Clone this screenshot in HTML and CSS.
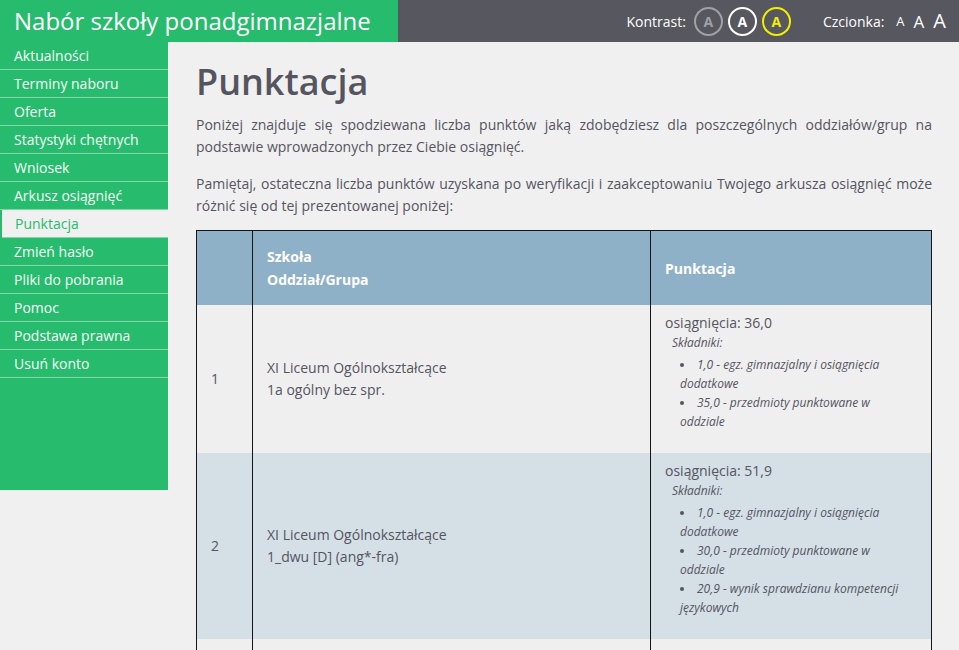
FILE: index.html
```html
<!DOCTYPE html>
<html lang="pl">
<head>
<meta charset="utf-8">
<title>Nabór szkoły ponadgimnazjalne</title>
<link rel="stylesheet" href="styles.css">
</head>
<body>
<header class="topbar">
  <div class="brand">Nabór szkoły ponadgimnazjalne</div>
  <div class="tools">
    <span class="tool-label">Kontrast:</span>
    <span class="contrast c-gray">A</span>
    <span class="contrast c-white">A</span>
    <span class="contrast c-yellow">A</span>
    <span class="tool-label font-label">Czcionka:</span>
    <span class="fs fs-s">A</span>
    <span class="fs fs-m">A</span>
    <span class="fs fs-l">A</span>
  </div>
</header>
<div class="layout">
  <nav class="sidebar">
    <a class="nav-item">Aktualności</a>
    <a class="nav-item">Terminy naboru</a>
    <a class="nav-item">Oferta</a>
    <a class="nav-item">Statystyki chętnych</a>
    <a class="nav-item">Wniosek</a>
    <a class="nav-item">Arkusz osiągnięć</a>
    <a class="nav-item active">Punktacja</a>
    <a class="nav-item">Zmień hasło</a>
    <a class="nav-item">Pliki do pobrania</a>
    <a class="nav-item">Pomoc</a>
    <a class="nav-item">Podstawa prawna</a>
    <a class="nav-item">Usuń konto</a>
  </nav>
  <main class="content">
    <h1 class="title">Punktacja</h1>
    <p class="text">Poniżej znajduje się spodziewana liczba punktów jaką zdobędziesz dla poszczególnych oddziałów/grup na podstawie wprowadzonych przez Ciebie osiągnięć.</p>
    <p class="text">Pamiętaj, ostateczna liczba punktów uzyskana po weryfikacji i zaakceptowaniu Twojego arkusza osiągnięć może różnić się od tej prezentowanej poniżej:</p>
    <table class="results">
      <thead>
        <tr>
          <th class="col-num"></th>
          <th class="col-school">Szkoła<br>Oddział/Grupa</th>
          <th class="col-points">Punktacja</th>
        </tr>
      </thead>
      <tbody>
        <tr class="row-odd">
          <td class="col-num">1</td>
          <td class="col-school">XI Liceum Ogólnokształcące<br>1a ogólny bez spr.</td>
          <td class="col-points">
            <div class="total">osiągnięcia: 36,0</div>
            <div class="parts-label">Składniki:</div>
            <ul class="parts">
              <li>1,0 - egz. gimnazjalny i osiągnięcia dodatkowe</li>
              <li>35,0 - przedmioty punktowane w oddziale</li>
            </ul>
          </td>
        </tr>
        <tr class="row-even">
          <td class="col-num">2</td>
          <td class="col-school">XI Liceum Ogólnokształcące<br>1_dwu [D] (ang*-fra)</td>
          <td class="col-points">
            <div class="total">osiągnięcia: 51,9</div>
            <div class="parts-label">Składniki:</div>
            <ul class="parts">
              <li>1,0 - egz. gimnazjalny i osiągnięcia dodatkowe</li>
              <li>30,0 - przedmioty punktowane w oddziale</li>
              <li>20,9 - wynik sprawdzianu kompetencji językowych</li>
            </ul>
          </td>
        </tr>
        <tr class="row-odd">
          <td class="col-num">3</td>
          <td class="col-school">XI Liceum Ogólnokształcące<br>1b ogólny</td>
          <td class="col-points">
            <div class="total">osiągnięcia: 36,0</div>
            <div class="parts-label">Składniki:</div>
            <ul class="parts">
              <li>1,0 - egz. gimnazjalny i osiągnięcia dodatkowe</li>
              <li>35,0 - przedmioty punktowane w oddziale</li>
            </ul>
          </td>
        </tr>
      </tbody>
    </table>
  </main>
</div>
</body>
</html>
```
FILE: styles.css
```css
* { box-sizing: border-box; }
html, body {
  margin: 0;
  padding: 0;
  background: #f0f0f0;
  font-family: "Open Sans", "Liberation Sans", sans-serif;
  color: #55555f;
}
.topbar {
  display: flex;
  height: 42px;
}
.brand {
  width: 398px;
  background: #27bb6d;
  color: #ffffff;
  font-size: 24px;
  line-height: 42px;
  padding-left: 14px;
  white-space: nowrap;
}
.tools {
  flex: 1;
  background: #57575f;
  display: flex;
  align-items: center;
  justify-content: flex-end;
  padding-right: 13px;
  color: #ffffff;
  font-size: 14px;
}
.tool-label { margin-right: 8px; }
.font-label { margin-left: 32px; margin-right: 12px; }
.contrast {
  width: 29px;
  height: 29px;
  border-radius: 50%;
  border: 2px solid;
  display: flex;
  align-items: center;
  justify-content: center;
  font-weight: 700;
  font-size: 14px;
  margin-right: 5px;
}
.c-gray { border-color: #a0a0a6; color: #a0a0a6; }
.c-white { border-color: #ffffff; color: #ffffff; }
.c-yellow { border-color: #f2f000; color: #f2f000; margin-right: 0; }
.fs { margin-left: 9px; line-height: 1; }
.fs-s { font-size: 13px; margin-left: 0; }
.fs-m { font-size: 17px; }
.fs-l { font-size: 20px; }

.layout {
  display: flex;
  align-items: flex-start;
}
.sidebar {
  width: 168px;
  height: 448px;
  background: #27bb6d;
  flex-shrink: 0;
  display: flex;
  flex-direction: column;
}
.nav-item {
  display: block;
  height: 28px;
  line-height: 28px;
  padding-left: 14px;
  font-size: 14px;
  color: #f4fff8;
  border-bottom: 1px solid #7fd8a6;
  white-space: nowrap;
}
.nav-item.active {
  background: #f0f0f0;
  color: #27bb6d;
  margin-left: 2px;
  padding-left: 13px;
}

.content {
  flex: 1;
  padding: 17px 27px 0 28px;
}
.title {
  margin: 0 0 9px;
  font-size: 36px;
  line-height: 46px;
  font-weight: 600;
  color: #55555f;
}
.text {
  margin: 0 0 15px;
  font-size: 14px;
  line-height: 22px;
  text-align: justify;
}
.results {
  width: 100%;
  border-collapse: collapse;
  border: 1px solid #151515;
  margin-top: -2px;
  font-size: 14px;
}
.results th, .results td {
  border-left: 1px solid #151515;
  border-right: 1px solid #151515;
  text-align: left;
  padding: 0 14px;
}
.results thead tr { background: #8fb1c8; }
.results th {
  color: #ffffff;
  font-weight: 700;
  line-height: 23px;
  height: 74px;
  padding-top: 14px;
  padding-bottom: 14px;
  vertical-align: middle;
}
.col-num { width: 56px; }
.col-points { width: 281px; }
.results td {
  line-height: 22px;
  vertical-align: middle;
  color: #55555f;
}
.results td.col-points {
  vertical-align: top;
  padding-top: 8px;
  padding-bottom: 10px;
}
.row-odd { background: #efefef; }
.row-even { background: #d4dfe6; }
.total { line-height: 20px; }
.parts-label {
  font-size: 12px;
  font-style: italic;
  line-height: 20px;
  padding-left: 7px;
}
.parts {
  margin: 2px 0 12px;
  padding-left: 15px;
  list-style-position: inside;
  font-size: 12px;
  font-style: italic;
  line-height: 19px;
}
```
